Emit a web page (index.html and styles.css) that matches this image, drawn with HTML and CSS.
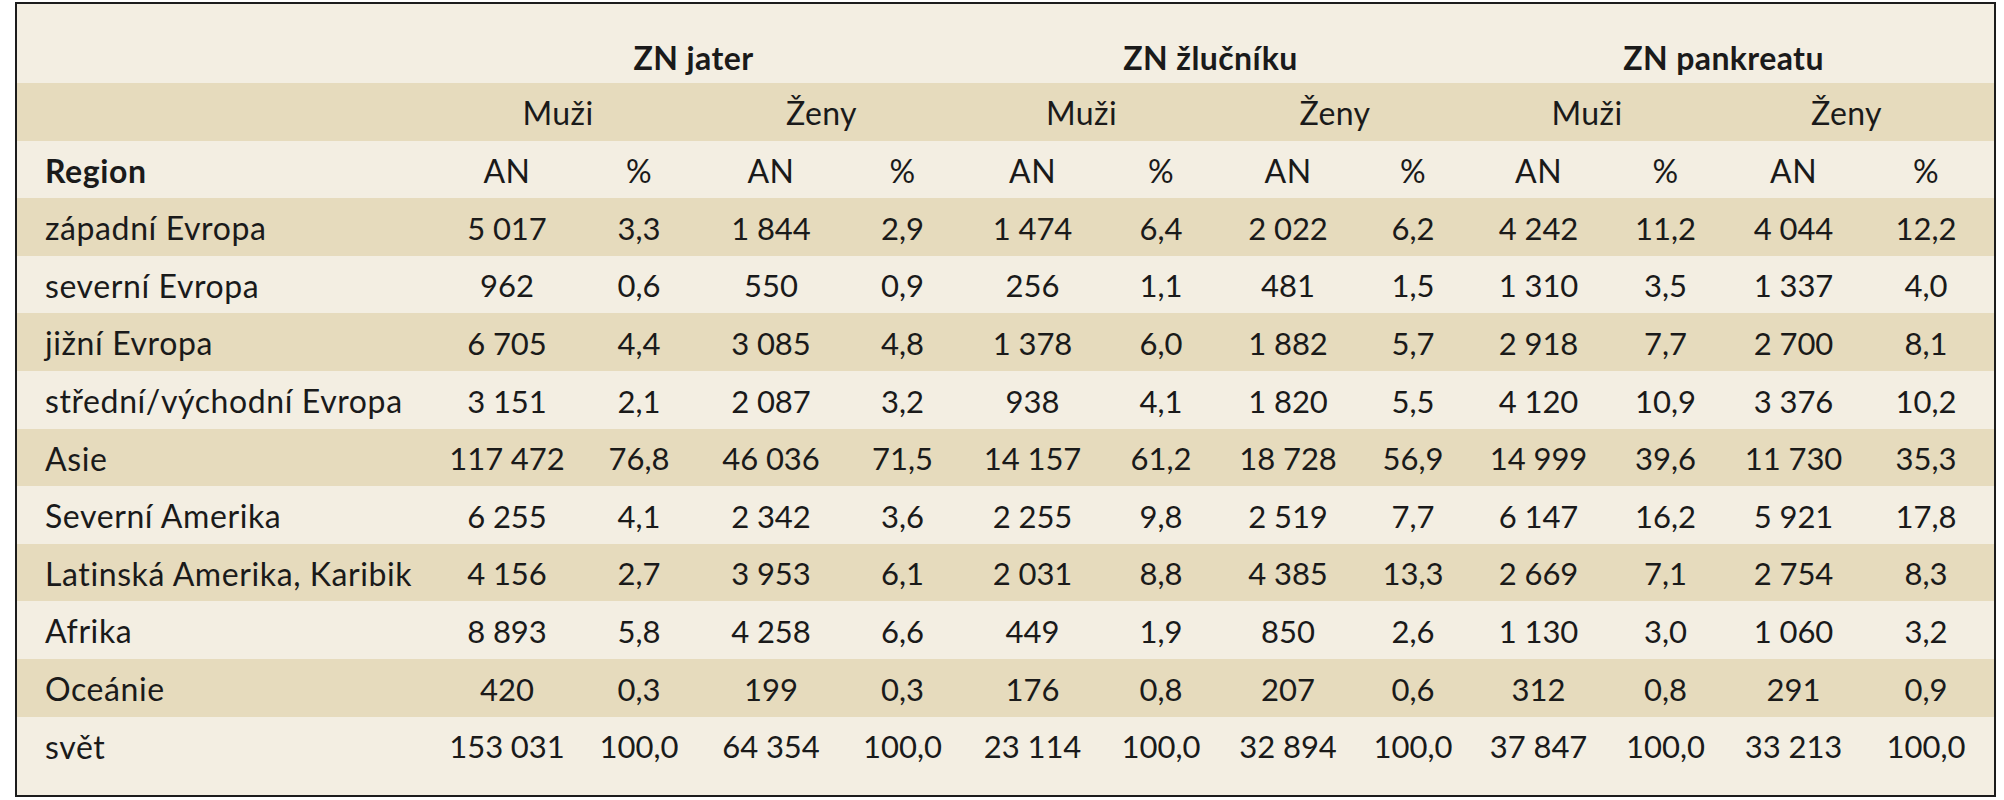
FILE: index.html
```html
<!DOCTYPE html>
<html lang="cs">
<head>
<meta charset="utf-8">
<title>ZN jater, žlučníku a pankreatu</title>
<link rel="stylesheet" href="styles.css">
</head>
<body>
<table class="data">
  <colgroup>
    <col class="w-region">
    <col class="w1"><col class="w2"><col class="w3"><col class="w4">
    <col class="w5"><col class="w6"><col class="w7"><col class="w8">
    <col class="w9"><col class="w10"><col class="w11"><col class="w12">
  </colgroup>
  <thead>
    <tr class="r-zn">
      <th></th>
      <th colspan="4" class="grp">ZN jater</th>
      <th colspan="4" class="grp">ZN žlučníku</th>
      <th colspan="4" class="grp">ZN pankreatu</th>
    </tr>
    <tr class="r-row band">
      <th></th>
      <th colspan="2" class="sub">Muži</th>
      <th colspan="2" class="sub">Ženy</th>
      <th colspan="2" class="sub">Muži</th>
      <th colspan="2" class="sub">Ženy</th>
      <th colspan="2" class="sub">Muži</th>
      <th colspan="2" class="sub">Ženy</th>
    </tr>
    <tr class="r-row">
      <th class="lbl strong">Region</th>
      <th>AN</th><th>%</th><th>AN</th><th>%</th>
      <th>AN</th><th>%</th><th>AN</th><th>%</th>
      <th>AN</th><th>%</th><th>AN</th><th>%</th>
    </tr>
  </thead>
  <tbody>
    <tr class="r-row band">
      <td class="lbl">západní Evropa</td>
      <td>5&#8239;017</td><td>3,3</td><td>1&#8239;844</td><td>2,9</td>
      <td>1&#8239;474</td><td>6,4</td><td>2&#8239;022</td><td>6,2</td>
      <td>4&#8239;242</td><td>11,2</td><td>4&#8239;044</td><td>12,2</td>
    </tr>
    <tr class="r-row">
      <td class="lbl">severní Evropa</td>
      <td>962</td><td>0,6</td><td>550</td><td>0,9</td>
      <td>256</td><td>1,1</td><td>481</td><td>1,5</td>
      <td>1&#8239;310</td><td>3,5</td><td>1&#8239;337</td><td>4,0</td>
    </tr>
    <tr class="r-row band">
      <td class="lbl">jižní Evropa</td>
      <td>6&#8239;705</td><td>4,4</td><td>3&#8239;085</td><td>4,8</td>
      <td>1&#8239;378</td><td>6,0</td><td>1&#8239;882</td><td>5,7</td>
      <td>2&#8239;918</td><td>7,7</td><td>2&#8239;700</td><td>8,1</td>
    </tr>
    <tr class="r-row">
      <td class="lbl">střední/východní Evropa</td>
      <td>3&#8239;151</td><td>2,1</td><td>2&#8239;087</td><td>3,2</td>
      <td>938</td><td>4,1</td><td>1&#8239;820</td><td>5,5</td>
      <td>4&#8239;120</td><td>10,9</td><td>3&#8239;376</td><td>10,2</td>
    </tr>
    <tr class="r-row band">
      <td class="lbl">Asie</td>
      <td>117&#8239;472</td><td>76,8</td><td>46&#8239;036</td><td>71,5</td>
      <td>14&#8239;157</td><td>61,2</td><td>18&#8239;728</td><td>56,9</td>
      <td>14&#8239;999</td><td>39,6</td><td>11&#8239;730</td><td>35,3</td>
    </tr>
    <tr class="r-row">
      <td class="lbl">Severní Amerika</td>
      <td>6&#8239;255</td><td>4,1</td><td>2&#8239;342</td><td>3,6</td>
      <td>2&#8239;255</td><td>9,8</td><td>2&#8239;519</td><td>7,7</td>
      <td>6&#8239;147</td><td>16,2</td><td>5&#8239;921</td><td>17,8</td>
    </tr>
    <tr class="r-row band">
      <td class="lbl">Latinská Amerika, Karibik</td>
      <td>4&#8239;156</td><td>2,7</td><td>3&#8239;953</td><td>6,1</td>
      <td>2&#8239;031</td><td>8,8</td><td>4&#8239;385</td><td>13,3</td>
      <td>2&#8239;669</td><td>7,1</td><td>2&#8239;754</td><td>8,3</td>
    </tr>
    <tr class="r-row">
      <td class="lbl">Afrika</td>
      <td>8&#8239;893</td><td>5,8</td><td>4&#8239;258</td><td>6,6</td>
      <td>449</td><td>1,9</td><td>850</td><td>2,6</td>
      <td>1&#8239;130</td><td>3,0</td><td>1&#8239;060</td><td>3,2</td>
    </tr>
    <tr class="r-row band">
      <td class="lbl">Oceánie</td>
      <td>420</td><td>0,3</td><td>199</td><td>0,3</td>
      <td>176</td><td>0,8</td><td>207</td><td>0,6</td>
      <td>312</td><td>0,8</td><td>291</td><td>0,9</td>
    </tr>
    <tr class="r-last">
      <td class="lbl">svět</td>
      <td>153&#8239;031</td><td>100,0</td><td>64&#8239;354</td><td>100,0</td>
      <td>23&#8239;114</td><td>100,0</td><td>32&#8239;894</td><td>100,0</td>
      <td>37&#8239;847</td><td>100,0</td><td>33&#8239;213</td><td>100,0</td>
    </tr>
  </tbody>
</table>
</body>
</html>
```

FILE: styles.css
```css
html, body {
  margin: 0;
  padding: 0;
  background: #ffffff;
}

.data {
  margin: 2px 0 0 15px;
  width: 1981px;
  table-layout: fixed;
  border-collapse: separate;
  border-spacing: 0;
  border: 2px solid #1c1c1c;
  background: #f3eee2;
  font-family: Lato, "Open Sans", "DejaVu Sans", sans-serif;
  font-size: 31px;
  color: #1a1a1a;
}

.w-region { width: 424px; }
.w1 { width: 132px; }
.w2 { width: 132px; }
.w3 { width: 132px; }
.w4 { width: 131px; }
.w5 { width: 129px; }
.w6 { width: 128px; }
.w7 { width: 126px; }
.w8 { width: 124px; }
.w9 { width: 127px; }
.w10 { width: 127px; }
.w11 { width: 129px; }
.w12 { width: 136px; }

.data th,
.data td {
  padding: 3px 0 0 0;
  text-align: center;
  vertical-align: middle;
  font-weight: normal;
  white-space: nowrap;
  line-height: 1.2;
}

.data th {
  font-size: 32px;
  letter-spacing: 0.4px;
}

.r-zn { height: 79px; }
.r-zn th { padding-top: 30px; }
.r-zn .grp {
  font-weight: bold;
  padding-right: 22px;
}

.r-row { height: 57.6px; }
.r-last { height: 78px; }
.r-last td { padding-bottom: 20px; }

.band { background: #e6dbbd; }

.data .sub { padding-right: 30px; }

.data .lbl {
  text-align: left;
  padding-left: 28px;
  font-size: 32px;
  letter-spacing: 0.6px;
}

.data .strong { font-weight: bold; }
```
